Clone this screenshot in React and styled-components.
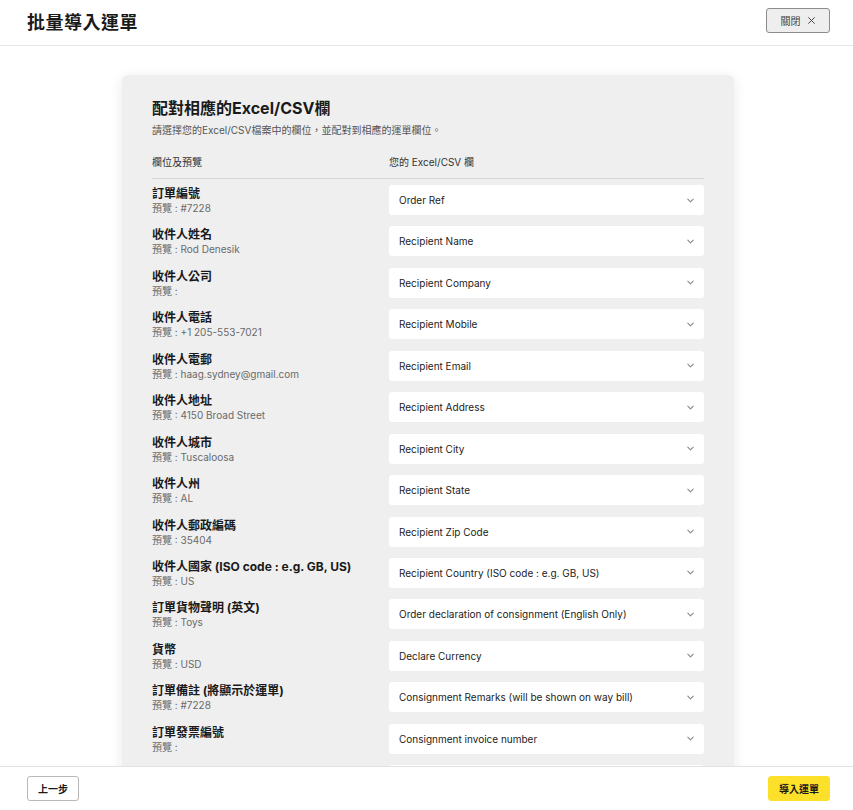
import React from "react";
import styled, { createGlobalStyle } from "styled-components";

const Global = createGlobalStyle`
  html, body { margin: 0; padding: 0; background: #fff; }
  body { font-family: Inter, "Noto Sans CJK TC", sans-serif; color: #1a1a1a; }
  * { box-sizing: border-box; }
`;

const Page = styled.div`
  height: 100vh;
  display: flex;
  flex-direction: column;
  overflow: hidden;
`;

const Header = styled.header`
  height: 46px;
  flex: none;
  display: flex;
  align-items: center;
  justify-content: space-between;
  padding: 0 23px 4px 27px;
  border-bottom: 1px solid #e6e6e6;
`;

const PageTitle = styled.h1`
  margin: 0;
  font-size: 18px;
  font-weight: 700;
  letter-spacing: 0.5px;
`;

const CloseButton = styled.button`
  height: 25px;
  width: 64px;
  display: flex;
  align-items: center;
  justify-content: center;
  gap: 6px;
  background: #eeeeee;
  border: 1px solid #8c8c8c;
  border-radius: 3px;
  font-family: inherit;
  font-size: 10px;
  color: #444;
  margin-top: -1px;
`;

const Main = styled.main`
  flex: 1;
  overflow: hidden;
  padding-top: 29px;
  display: flex;
  justify-content: center;
  align-items: flex-start;
`;

const Card = styled.section`
  width: 612px;
  margin-left: 3px;
  background: #efefef;
  border-radius: 6px;
  box-shadow: 0 3px 14px rgba(0, 0, 0, 0.09);
  padding: 22px 30px 40px;
  flex: none;
`;

const CardTitle = styled.h2`
  margin: 0;
  font-size: 16px;
  line-height: 22px;
  font-weight: 700;
`;

const CardSub = styled.p`
  margin: 4px 0 0;
  font-size: 10px;
  line-height: 14px;
  color: #555;
`;

const ColumnHeads = styled.div`
  display: grid;
  grid-template-columns: 237px 1fr;
  margin-top: 18px;
  padding-bottom: 9px;
  border-bottom: 1px solid #d6d6d6;
  font-size: 10px;
  line-height: 14px;
  color: #333;
`;

const Rows = styled.div`
  display: flex;
  flex-direction: column;
  gap: 11.45px;
  margin-top: 6px;
`;

const Row = styled.div`
  display: grid;
  grid-template-columns: 237px 1fr;
  align-items: start;
  height: 30px;
`;

const Label = styled.div`
  display: flex;
  flex-direction: column;
  padding-top: 1px;
`;

const FieldName = styled.div`
  font-size: 12px;
  line-height: 15px;
  font-weight: 700;
  color: #1a1a1a;
`;

const Preview = styled.div`
  font-size: 10px;
  line-height: 14px;
  color: #6a6a6a;
`;

const Select = styled.div`
  height: 30px;
  background: #fff;
  border-radius: 3px;
  display: flex;
  align-items: center;
  justify-content: space-between;
  padding: 0 9px 0 10px;
  font-size: 10px;
  color: #222;
`;

const Chevron = () => (
  <svg width="9" height="9" viewBox="0 0 10 10" fill="none">
    <path d="M2 3.5 L5 6.5 L8 3.5" stroke="#888" strokeWidth="1.2" strokeLinecap="round" strokeLinejoin="round" />
  </svg>
);

const Footer = styled.footer`
  height: 44px;
  flex: none;
  border-top: 1px solid #e2e2e2;
  display: flex;
  align-items: center;
  justify-content: space-between;
  padding: 0 23px 0 27px;
  background: #fff;
  position: relative;
  z-index: 1;
`;

const Button = styled.button`
  height: 25px;
  padding: 0 10px;
  min-width: ${(p) => (p.$primary ? "60px" : "51px")};
  border-radius: 3px;
  font-family: inherit;
  font-size: 10px;
  font-weight: 700;
  color: #1a1a1a;
  background: ${(p) => (p.$primary ? "#fde02a" : "#fff")};
  border: 1px solid ${(p) => (p.$primary ? "#fde02a" : "#b8b8b8")};
`;

const rows = [
  ["訂單編號", "#7228", "Order Ref"],
  ["收件人姓名", "Rod Denesik", "Recipient Name"],
  ["收件人公司", "", "Recipient Company"],
  ["收件人電話", "+1 205-553-7021", "Recipient Mobile"],
  ["收件人電郵", "haag.sydney@gmail.com", "Recipient Email"],
  ["收件人地址", "4150 Broad Street", "Recipient Address"],
  ["收件人城市", "Tuscaloosa", "Recipient City"],
  ["收件人州", "AL", "Recipient State"],
  ["收件人郵政編碼", "35404", "Recipient Zip Code"],
  ["收件人國家 (ISO code : e.g. GB, US)", "US", "Recipient Country (ISO code : e.g. GB, US)"],
  ["訂單貨物聲明 (英文)", "Toys", "Order declaration of consignment (English Only)"],
  ["貨幣", "USD", "Declare Currency"],
  ["訂單備註 (將顯示於運單)", "#7228", "Consignment Remarks (will be shown on way bill)"],
  ["訂單發票編號", "", "Consignment invoice number"],
];

export default function App() {
  return (
    <Page>
      <Global />
      <Header>
        <PageTitle>批量導入運單</PageTitle>
        <CloseButton>
          <span>關閉</span>
          <svg width="9" height="9" viewBox="0 0 10 10">
            <path d="M1.5 1.5 L8.5 8.5 M8.5 1.5 L1.5 8.5" stroke="#444" strokeWidth="1.1" />
          </svg>
        </CloseButton>
      </Header>
      <Main>
        <Card>
          <CardTitle>配對相應的Excel/CSV欄</CardTitle>
          <CardSub>請選擇您的Excel/CSV檔案中的欄位，並配對到相應的運單欄位。</CardSub>
          <ColumnHeads>
            <span>欄位及預覽</span>
            <span>您的 Excel/CSV 欄</span>
          </ColumnHeads>
          <Rows>
            {rows.map(([name, preview, col]) => (
              <Row key={name}>
                <Label>
                  <FieldName>{name}</FieldName>
                  <Preview>預覽 : {preview}</Preview>
                </Label>
                <Select>
                  <span>{col}</span>
                  <Chevron />
                </Select>
              </Row>
            ))}
            <Row>
              <Label />
              <Select />
            </Row>
          </Rows>
        </Card>
      </Main>
      <Footer>
        <Button>上一步</Button>
        <Button $primary>導入運單</Button>
      </Footer>
    </Page>
  );
}
